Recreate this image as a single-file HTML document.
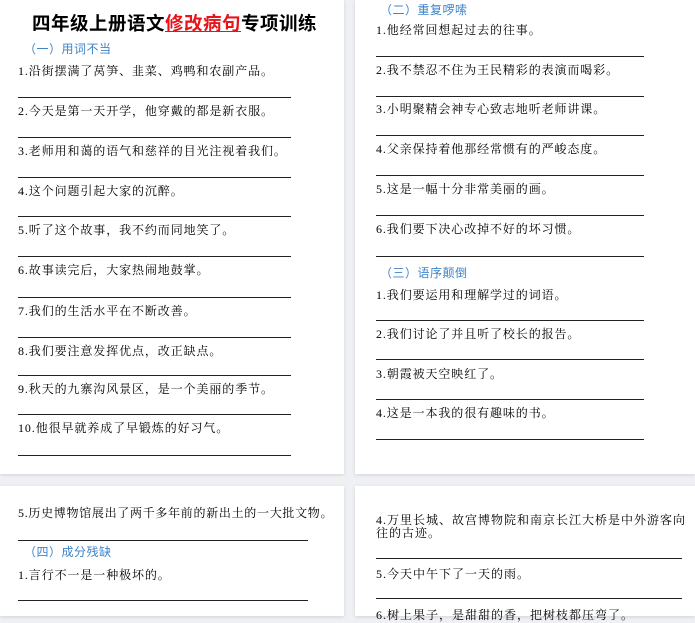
<!DOCTYPE html><html><head><meta charset="utf-8"><style>
body{margin:0;width:695px;height:611px;background:#eef0f4;position:relative;overflow:hidden;font-family:"Liberation Serif","Noto Serif CJK SC",serif;color:#000;}
.p{position:absolute;background:#fff;box-shadow:0 1px 3px rgba(0,0,0,.12);}
.t{position:absolute;font-size:12px;line-height:16px;white-space:nowrap;letter-spacing:0.9px;}
.h{position:absolute;font-size:12px;line-height:16px;color:#3d84c8;font-family:"Liberation Sans","Noto Sans CJK SC",sans-serif;white-space:nowrap;letter-spacing:0.5px;}
.l{position:absolute;height:1px;background:#222;}
</style></head><body>
<div class="p" style="left:0;top:0;width:344px;height:474px"></div>
<div class="p" style="left:355px;top:0;width:340px;height:474px"></div>
<div class="p" style="left:0;top:486px;width:344px;height:130px"></div>
<div class="p" style="left:355px;top:486px;width:340px;height:130px"></div>

<div style="position:absolute;left:32px;top:12px;font-size:18.5px;font-weight:bold;font-family:'Liberation Sans','Noto Sans CJK SC',sans-serif;white-space:nowrap;line-height:24px;letter-spacing:0.5px">四年级上册语文<span style="color:#e8141a;text-decoration:underline">修改病句</span>专项训练</div>
<div class="h" style="left:24px;top:41px">（一）用词不当</div>
<div class="t" style="left:18px;top:63px">1.沿街摆满了莴笋、韭菜、鸡鸭和农副产品。</div>
<div class="l" style="left:18px;top:97px;width:273px"></div>
<div class="t" style="left:18px;top:103px">2.今天是第一天开学，他穿戴的都是新衣服。</div>
<div class="l" style="left:18px;top:137px;width:273px"></div>
<div class="t" style="left:18px;top:143px">3.老师用和蔼的语气和慈祥的目光注视着我们。</div>
<div class="l" style="left:18px;top:177px;width:273px"></div>
<div class="t" style="left:18px;top:183px">4.这个问题引起大家的沉醉。</div>
<div class="l" style="left:18px;top:216px;width:273px"></div>
<div class="t" style="left:18px;top:222px">5.听了这个故事，我不约而同地笑了。</div>
<div class="l" style="left:18px;top:256px;width:273px"></div>
<div class="t" style="left:18px;top:262px">6.故事读完后，大家热闹地鼓掌。</div>
<div class="l" style="left:18px;top:297px;width:273px"></div>
<div class="t" style="left:18px;top:303px">7.我们的生活水平在不断改善。</div>
<div class="l" style="left:18px;top:337px;width:273px"></div>
<div class="t" style="left:18px;top:343px">8.我们要注意发挥优点，改正缺点。</div>
<div class="l" style="left:18px;top:375px;width:273px"></div>
<div class="t" style="left:18px;top:381px">9.秋天的九寨沟风景区，是一个美丽的季节。</div>
<div class="l" style="left:18px;top:414px;width:273px"></div>
<div class="t" style="left:18px;top:420px">10.他很早就养成了早锻炼的好习气。</div>
<div class="l" style="left:18px;top:455px;width:273px"></div>

<div class="h" style="left:380px;top:2px">（二）重复啰嗦</div>
<div class="t" style="left:376px;top:22px">1.他经常回想起过去的往事。</div>
<div class="l" style="left:376px;top:56px;width:268px"></div>
<div class="t" style="left:376px;top:62px">2.我不禁忍不住为王民精彩的表演而喝彩。</div>
<div class="l" style="left:376px;top:96px;width:268px"></div>
<div class="t" style="left:376px;top:101px">3.小明聚精会神专心致志地听老师讲课。</div>
<div class="l" style="left:376px;top:135px;width:268px"></div>
<div class="t" style="left:376px;top:141px">4.父亲保持着他那经常惯有的严峻态度。</div>
<div class="l" style="left:376px;top:175px;width:268px"></div>
<div class="t" style="left:376px;top:181px">5.这是一幅十分非常美丽的画。</div>
<div class="l" style="left:376px;top:215px;width:268px"></div>
<div class="t" style="left:376px;top:221px">6.我们要下决心改掉不好的坏习惯。</div>
<div class="l" style="left:376px;top:256px;width:268px"></div>
<div class="h" style="left:380px;top:265px">（三）语序颠倒</div>
<div class="t" style="left:376px;top:287px">1.我们要运用和理解学过的词语。</div>
<div class="l" style="left:376px;top:320px;width:268px"></div>
<div class="t" style="left:376px;top:326px">2.我们讨论了并且听了校长的报告。</div>
<div class="l" style="left:376px;top:359px;width:268px"></div>
<div class="t" style="left:376px;top:366px">3.朝霞被天空映红了。</div>
<div class="l" style="left:376px;top:399px;width:268px"></div>
<div class="t" style="left:376px;top:405px">4.这是一本我的很有趣味的书。</div>
<div class="l" style="left:376px;top:439px;width:268px"></div>

<div class="t" style="left:18px;top:505px;letter-spacing:0.7px">5.历史博物馆展出了两千多年前的新出土的一大批文物。</div>
<div class="l" style="left:18px;top:540px;width:290px"></div>
<div class="h" style="left:24px;top:544px">（四）成分残缺</div>
<div class="t" style="left:18px;top:567px">1.言行不一是一种极坏的。</div>
<div class="l" style="left:18px;top:600px;width:290px"></div>

<div class="t" style="left:376px;top:512px;letter-spacing:1.0px">4.万里长城、故宫博物院和南京长江大桥是中外游客向</div>
<div class="t" style="left:376px;top:525px;letter-spacing:1.0px">往的古迹。</div>
<div class="l" style="left:376px;top:558px;width:306px"></div>
<div class="t" style="left:376px;top:566px;letter-spacing:1.0px">5.今天中午下了一天的雨。</div>
<div class="l" style="left:376px;top:598px;width:306px"></div>
<div class="t" style="left:376px;top:607px;letter-spacing:1.0px">6.树上果子，是甜甜的香，把树枝都压弯了。</div>
</body></html>
